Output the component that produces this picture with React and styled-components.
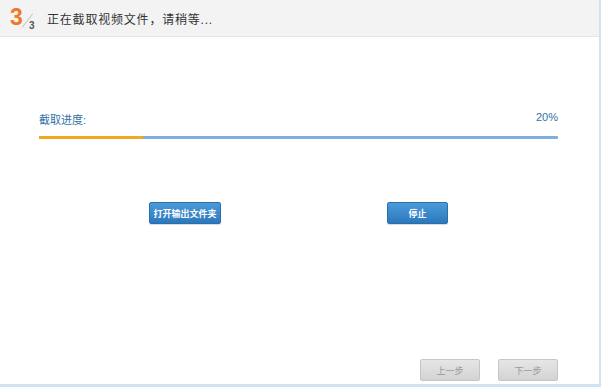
import React from "react";
import styled, { createGlobalStyle } from "styled-components";

const GlobalStyle = createGlobalStyle`
  html, body {
    margin: 0;
    padding: 0;
    background: #ffffff;
  }
  body {
    font-family: "Liberation Sans", "Noto Sans CJK SC", sans-serif;
  }
`;

const Frame = styled.div`
  width: 599px;
  height: 384px;
  display: flex;
  flex-direction: column;
  background: #ffffff;
  border-right: 2px solid #cfe3f2;
  border-bottom: 3px solid #cfe3f2;
`;

const Header = styled.div`
  height: 37px;
  display: flex;
  align-items: center;
  background: #f3f3f3;
  border-bottom: 1px solid #e6e6e6;
  padding-left: 10px;
  box-sizing: border-box;
`;

const Step = styled.div`
  position: relative;
  width: 26px;
  height: 30px;
  margin-right: 11px;
`;

const StepBig = styled.span`
  position: absolute;
  left: 0;
  top: 1px;
  font-size: 23px;
  font-weight: bold;
  color: #f0782a;
  font-family: "Liberation Sans", sans-serif;
`;

const StepSlash = styled.span`
  position: absolute;
  left: 17px;
  top: 9px;
  width: 1px;
  height: 17px;
  background: #c4c4c4;
  transform: rotate(38deg);
`;

const StepSmall = styled.span`
  position: absolute;
  left: 19px;
  top: 17px;
  font-size: 10px;
  font-weight: bold;
  color: #555;
`;

const Title = styled.div`
  font-size: 12px;
  color: #333;
  letter-spacing: 0.8px;
`;

const Body = styled.div`
  flex: 1;
  display: flex;
  flex-direction: column;
  padding: 74px 41px 0 39px;
`;

const LabelRow = styled.div`
  display: flex;
  justify-content: space-between;
  font-size: 11px;
  color: #2f72a8;
  height: 14px;
`;

const Bar = styled.div`
  margin-top: 11px;
  height: 3px;
  background: #7eaedb;
  border-radius: 1px;
  overflow: hidden;
`;

const Fill = styled.div`
  height: 100%;
  background: #f0a820;
`;

const ActionRow = styled.div`
  display: flex;
  margin-top: 63px;
  padding-left: 110px;
  gap: 166px;
`;

const BlueButton = styled.button`
  width: ${({ $w }) => $w}px;
  height: 22px;
  border: 1px solid #2c6ea8;
  border-radius: 2px;
  background: linear-gradient(#4b9ad9, #2c78bd);
  color: #fff;
  font-size: 9px;
  font-weight: bold;
  font-family: "Liberation Sans", "Noto Sans CJK SC", sans-serif;
  padding: 0;
  box-shadow: 0 1px 1px rgba(0, 0, 0, 0.15);
`;

const Footer = styled.div`
  display: flex;
  justify-content: flex-end;
  gap: 18px;
  padding: 0 41px 3px 0;
`;

const GrayButton = styled.button`
  width: 60px;
  height: 22px;
  border: 1px solid #c6c6c6;
  border-radius: 2px;
  background: linear-gradient(#e6e6e6, #d3d3d3);
  color: #9a9a9a;
  font-size: 9px;
  font-family: "Liberation Sans", "Noto Sans CJK SC", sans-serif;
  padding: 0;
`;

const Spacer = styled.div`
  flex: 1;
`;

export default function App() {
  const progress = 20;
  return (
    <>
      <GlobalStyle />
      <Frame>
        <Header>
          <Step>
            <StepBig>3</StepBig>
            <StepSlash />
            <StepSmall>3</StepSmall>
          </Step>
          <Title>正在截取视频文件，请稍等...</Title>
        </Header>
        <Body>
          <LabelRow>
            <span>截取进度:</span>
            <span>{progress}%</span>
          </LabelRow>
          <Bar>
            <Fill style={{ width: `${progress}%` }} />
          </Bar>
          <ActionRow>
            <BlueButton $w={72}>打开输出文件夹</BlueButton>
            <BlueButton $w={61}>停止</BlueButton>
          </ActionRow>
          <Spacer />
        </Body>
        <Footer>
          <GrayButton>上一步</GrayButton>
          <GrayButton>下一步</GrayButton>
        </Footer>
      </Frame>
    </>
  );
}
